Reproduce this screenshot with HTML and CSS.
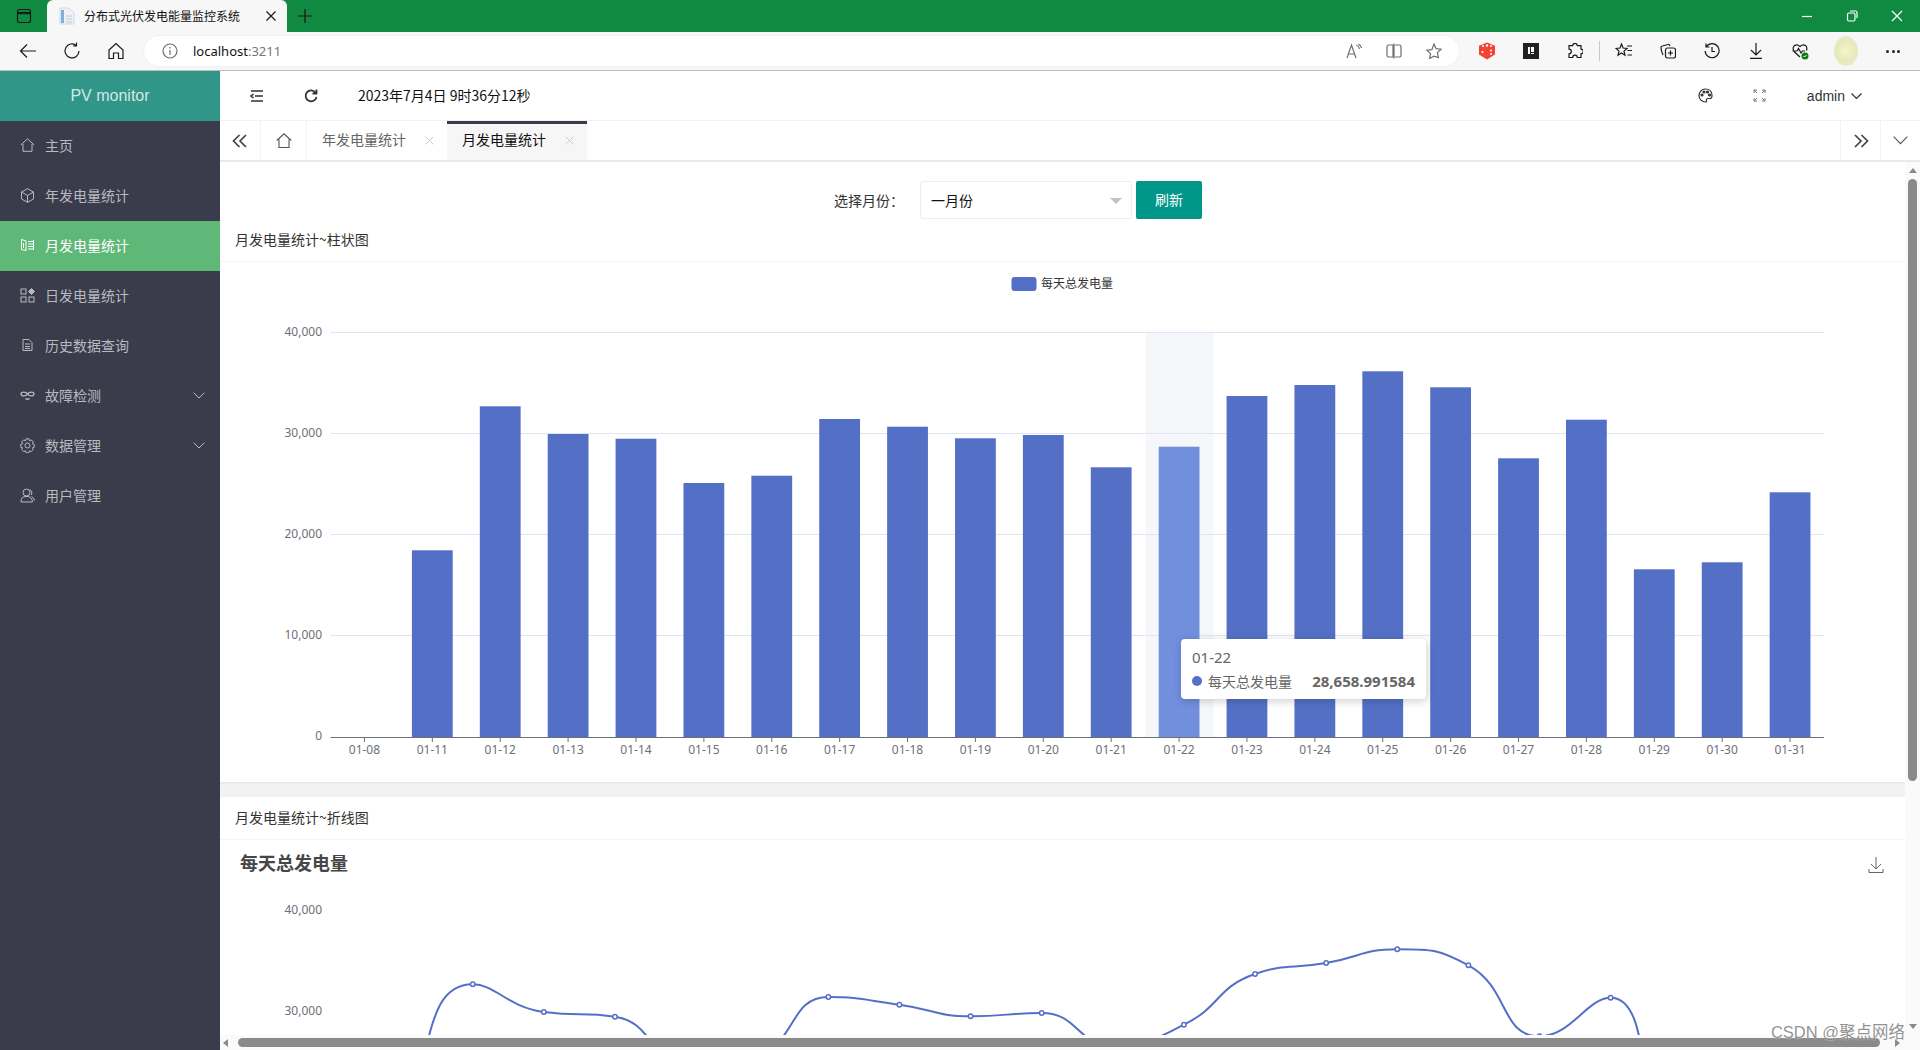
FILE: index.html
```html
<!DOCTYPE html>
<html lang="zh-CN">
<head>
<meta charset="utf-8">
<title>分布式光伏发电能量监控系统</title>
<link rel="stylesheet" href="styles.css">
</head>
<body>
<div class="win-tabs">
  <div class="win-menu"><svg width="16" height="16" viewBox="0 0 16 16" class="ic-dark"><rect x="1.5" y="1.5" width="13" height="13" rx="2"/><path d="M1.5 5h13" stroke-width="2.4"/></svg></div>
  <div class="win-tab">
    <svg width="16" height="18" viewBox="0 0 16 18"><path d="M1 1h9l5 5v11H1z" fill="#eef2f6" stroke="#c9d2da" stroke-width=".8"/><rect x="2" y="3" width="3" height="13" fill="#7fb0dc"/><path d="M7 9h6M7 12h6M7 15h6" stroke="#bcc6cf"/></svg>
    <span class="win-tab-title">分布式光伏发电能量监控系统</span>
    <svg class="ic-dark win-tab-x" width="10" height="10" viewBox="0 0 10 10"><path d="M.5.5l9 9M9.5.5l-9 9"/></svg>
  </div>
  <div class="win-plus"><svg class="ic-dark" width="14" height="14" viewBox="0 0 14 14"><path d="M7 0v14M0 7h14"/></svg></div>
  <div class="win-spacer"></div>
  <div class="win-ctl"><svg class="ic-light" width="12" height="12" viewBox="0 0 12 12"><path d="M1 6.5h10"/></svg></div>
  <div class="win-ctl"><svg class="ic-light" width="12" height="12" viewBox="0 0 12 12"><rect x="1.5" y="3" width="7.5" height="8" rx="1.5"/><path d="M4 1h5.5q1.5 0 1.500 1.5V8"/></svg></div>
  <div class="win-ctl"><svg class="ic-light" width="12" height="12" viewBox="0 0 12 12"><path d="M1 1l10 10M11 1L1 11"/></svg></div>
</div>

<div class="toolbar">
  <div class="tb-btn"><svg class="ic-dark" width="18" height="16" viewBox="0 0 18 16"><path d="M17 8H1.5M8 1.5L1.5 8 8 14.5"/></svg></div>
  <div class="tb-btn"><svg class="ic-dark" width="18" height="18" viewBox="0 0 18 18"><path d="M13.5 3.5A7 7 0 1 0 16 9M13.5 .5V4H10"/></svg></div>
  <div class="tb-btn"><svg class="ic-dark" width="16" height="18" viewBox="0 0 16 18"><path d="M1 8l7-6.5L15 8v8.5h-4.5V11h-5v5.5H1z"/></svg></div>
  <div class="address">
    <svg class="ic-gray addr-info" width="16" height="16" viewBox="0 0 16 16"><circle cx="8" cy="8" r="7"/><path d="M8 7v5M8 4v1.6"/></svg>
    <span class="addr-host">localhost<span class="addr-port">:3211</span></span>
    <div class="win-spacer"></div>
    <div class="addr-btn"><svg class="ic-gray" width="16" height="16" viewBox="0 0 16 16"><path d="M1 15L5.5 2 10 15M2.5 11h6M10.5 2q2.5 1 3 4M12.5 1q2.5 1.5 3 4"/></svg></div>
    <div class="addr-btn"><svg class="ic-gray" width="16" height="16" viewBox="0 0 16 16"><path d="M7 2H2.5Q1 2 1 3.5v9Q1 14 2.5 14H7zM9 2h4.5Q15 2 15 3.5v9q0 1.5-1.5 1.5H9M8 .5v15"/></svg></div>
    <div class="addr-btn"><svg class="ic-gray" width="16" height="16" viewBox="0 0 16 16"><path d="M8 1l2.1 4.600 5 .6-3.700 3.400 1 4.900L8 13.100l-4.400 2.400 1-4.900L.9 7.200l5-.6z"/></svg></div>
  </div>
  <div class="tb-btn tb-first"><svg width="18" height="18" viewBox="0 0 18 18"><path d="M9 .5l8 3.3v8.700L9 17.500 1 12.500V3.800z" fill="#f44336"/><circle cx="9" cy="3.500" r="1.200" fill="#fff"/><circle cx="5" cy="4" r="1" fill="#fff"/><circle cx="13" cy="4" r="1" fill="#fff"/><circle cx="4.500" cy="10" r="1.100" fill="#fff"/><circle cx="13" cy="8.500" r="1" fill="#fff"/><circle cx="13" cy="12" r="1" fill="#fff"/></svg></div>
  <div class="tb-btn"><svg width="16" height="16" viewBox="0 0 16 16"><rect width="16" height="16" fill="#222"/><path d="M5 4h2v7H5zM8 4h3v5H8zM8 10h3v1H8z" fill="#fff"/></svg></div>
  <div class="tb-btn"><svg class="ic-dark" width="16" height="16" viewBox="0 0 16 16"><path d="M5.700 2.700a2.300 2.300 0 0 1 4.600 0H14v3.500a2.300 2.300 0 0 1 0 4.600V14.500h-3.700a2.300 2.300 0 0 0-4.600 0H2v-3.700a2.300 2.300 0 0 0 0-4.600V2.700z"/></svg></div>
  <div class="tb-sep"></div>
  <div class="tb-btn"><svg class="ic-dark" width="18" height="16" viewBox="0 0 18 16"><path d="M6.500 1l1.600 4 4 .4-3.100 2.700 1 4.100-3.500-2.200-3.500 2.200 1-4.100L1 5.400l4-.4zM12 3h5M12.500 7.500H17M12.500 12H17"/></svg></div>
  <div class="tb-btn"><svg class="ic-dark" width="16" height="16" viewBox="0 0 16 16"><rect x="5.500" y="5" width="10" height="10" rx="2"/><path d="M10.500 7.500v5M8 10h5M3 12Q1 8 1 4.500 1 3 2.500 3L8 1.500Q9.500 1 10 3"/></svg></div>
  <div class="tb-btn"><svg class="ic-dark" width="16" height="16" viewBox="0 0 16 16"><path d="M2.500 3.500A7 7 0 1 1 1.100 8M2 .5V4h3.500M8 4v4.500h3"/></svg></div>
  <div class="tb-btn"><svg class="ic-dark" width="14" height="16" viewBox="0 0 14 16"><path d="M7 0v12M2 7l5 5 5-5M1 15.300h12"/></svg></div>
  <div class="tb-btn"><svg width="17" height="17" viewBox="0 0 17 17"><path class="stroke-dark" d="M8 14L2.500 9Q0 6 2 3q3-2.500 6 .5 3-3 6-.5 1.500 2 .5 4.500M.5 8H5l1.500-2.500L9 10l1.500-2H13" fill="none"/><circle cx="13" cy="13" r="3.500" fill="#107c10"/><path d="M11.500 13l1 1 2-2" stroke="#fff" fill="none"/></svg></div>
  <div class="tb-avatar"></div>
  <div class="tb-dots"><span></span><span></span><span></span></div>
</div>

<div class="app">
  <aside class="sidebar">
    <div class="logo">PV monitor</div>
    <nav class="menu">
      <a class="menu-item"><svg class="ic-menu" width="15" height="14" viewBox="0 0 15 14"><path d="M.8 7L7.500.8 14.200 7M3 6v7.300h9V6"/></svg><span>主页</span></a>
      <a class="menu-item"><svg class="ic-menu" width="15" height="15" viewBox="0 0 15 15"><path d="M7.500.7l6 3.300v7l-6 3.300-6-3.300V4zM1.500 4l6 3.500 6-3.500M7.500 7.500v6.800"/></svg><span>年发电量统计</span></a>
      <a class="menu-item is-active"><svg class="ic-menu" width="15" height="14" viewBox="0 0 15 14"><path d="M1.500 1.500L6 3v9.500l-4.500-1zM8 3.500h5M8 6h5M8 8.500h5M8 11h5M13.500 2v10M3.500 5v5"/></svg><span>月发电量统计</span></a>
      <a class="menu-item"><svg class="ic-menu" width="15" height="15" viewBox="0 0 15 15"><rect x="1" y="1" width="5" height="5"/><rect x="1" y="9" width="5" height="5"/><rect x="9" y="9" width="5" height="5"/><path d="M11.500 .5l3 3-3 3-3-3z" fill="currentColor"/></svg><span>日发电量统计</span></a>
      <a class="menu-item"><svg class="ic-menu" width="15" height="14" viewBox="0 0 15 14"><path d="M3 1.500h6l3 3v8H3zM5 6h5M5 8.500h5M5 10.500h5"/></svg><span>历史数据查询</span></a>
      <a class="menu-item"><svg class="ic-menu" width="15" height="12" viewBox="0 0 15 12"><path stroke-width="1.300" d="M7.500 5C6 2.500 1 2.500 1 5s5 2.500 6.500 0c1.500-2.500 6.500-2.500 6.500 0s-5 2.500-6.500 0M5.500 10h4"/></svg><span>故障检测</span><svg class="ic-menu menu-arrow" width="12" height="7" viewBox="0 0 12 7"><path d="M.7.7L6 6l5.300-5.300"/></svg></a>
      <a class="menu-item"><svg class="ic-menu" width="15" height="15" viewBox="0 0 15 15"><circle cx="7.500" cy="7.500" r="2.500"/><path d="M6 .8h3l.5 2 1.800-.9 2 2-.9 1.800 1.800.6v3l-1.800.5.9 1.800-2 2-1.800-.9-.5 2H6l-.5-2-1.800.9-2-2 .9-1.800-1.800-.5v-3l1.800-.6-.9-1.800 2-2 1.800.9z"/></svg><span>数据管理</span><svg class="ic-menu menu-arrow" width="12" height="7" viewBox="0 0 12 7"><path d="M.7.7L6 6l5.300-5.300"/></svg></a>
      <a class="menu-item"><svg class="ic-menu" width="15" height="15" viewBox="0 0 15 15"><circle cx="6.500" cy="4.500" r="3.500"/><path d="M1 14q0-5 4-5.500h3q4 .5 4.500 5.500zM10 1.500q3 2 1.500 5.500M11.500 8.500q2.500 1 3 4"/></svg><span>用户管理</span></a>
    </nav>
  </aside>

  <main class="main">
    <header class="header">
      <div class="hd-btn"><svg class="ic-head ic-strong" width="14" height="12" viewBox="0 0 14 12"><path d="M1 1h12M5 6h8M1 11h12M3.500 4L1 6l2.500 2"/></svg></div>
      <div class="hd-btn"><svg class="ic-head" width="14" height="14" viewBox="0 0 14 14"><path stroke-width="1.800" d="M11.500 3.500A5.500 5.500 0 1 0 12.500 8M12.500 .5v4h-4"/></svg></div>
      <div class="hd-date">2023年7月4日 9时36分12秒</div>
      <div class="win-spacer"></div>
      <div class="hd-btn"><svg class="ic-head" width="15" height="15" viewBox="0 0 15 15"><path d="M7.500 1a6.500 6.500 0 1 0 0 13q1.500 0 1-1.500-.5-2 1.500-2h2.500Q14 10.500 14 7 13.500 1 7.500 1z"/><circle cx="4" cy="7" r="1" fill="#333"/><circle cx="6" cy="4" r="1" fill="#333"/><circle cx="9.500" cy="4" r="1" fill="#333"/><circle cx="11.500" cy="7" r="1" fill="#333"/></svg></div>
      <div class="hd-btn"><svg class="ic-teal" width="13" height="13" viewBox="0 0 13 13"><path d="M1 4V1h3M9 1h3v3M12 9v3H9M4 12H1V9M1 1l3 3M12 1L9 4M12 12L9 9M1 12l3-3"/></svg></div>
      <div class="hd-user"><span>admin</span><svg class="ic-head" width="11" height="6" viewBox="0 0 11 6"><path d="M.5.5l5 5 5-5"/></svg></div>
    </header>

    <div class="tabbar">
      <div class="tab-ctl tab-ctl-left"><svg class="ic-tab" width="16" height="14" viewBox="0 0 16 14"><path d="M7.500 1L1.500 7l6 6M14 1L8 7l6 6"/></svg></div>
      <div class="tab-home"><svg class="ic-tab-thin" width="16" height="15" viewBox="0 0 16 15"><path d="M.8 7.500L8 .8l7.200 6.700M3 6.500v8h10v-8"/></svg></div>
      <div class="tab"><span>年发电量统计</span><svg class="tab-x" width="9" height="9" viewBox="0 0 9 9"><path d="M.5.5l8 8M8.500.5l-8 8"/></svg></div>
      <div class="tab is-active"><span>月发电量统计</span><svg class="tab-x" width="9" height="9" viewBox="0 0 9 9"><path d="M.5.5l8 8M8.500.5l-8 8"/></svg></div>
      <div class="win-spacer"></div>
      <div class="tab-ctl"><svg class="ic-tab" width="16" height="14" viewBox="0 0 16 14"><path d="M2 1l6 6-6 6M8.500 1l6 6-6 6"/></svg></div>
      <div class="tab-ctl"><svg class="ic-tab-thin" width="15" height="9" viewBox="0 0 15 9"><path d="M.7.7l6.800 7 6.800-7"/></svg></div>
    </div>

    <div class="content">
      <div class="viewport-col">
        <div class="viewport">
          <div class="filter">
            <label class="filter-label">选择月份：</label>
            <div class="select">一月份<span class="select-arrow"></span></div>
            <button class="btn">刷新</button>
          </div>
          <section class="card card-bar">
            <div class="card-head"><span>月发电量统计~柱状图</span></div>
            <svg id="barChart" class="chart chart-bar" viewBox="220 262 1685 520"></svg>
            <div class="tooltip">
              <div class="tooltip-title">01-22</div>
              <div class="tooltip-row"><i class="tooltip-dot"></i><span class="tooltip-name">每天总发电量</span><b class="tooltip-val">28,658.991584</b></div>
            </div>
          </section>
          <section class="card card-line">
            <div class="card-head"><span>月发电量统计~折线图</span></div>
            <svg id="lineChart" class="chart chart-line" viewBox="220 840 1685 300"></svg>
          </section>
        </div>
        <div class="hscroll">
          <span class="arrow arrow-left"></span>
          <div class="hscroll-thumb"></div>
          <span class="arrow arrow-right"></span>
        </div>
      </div>
      <div class="vscroll">
        <span class="arrow arrow-up"></span>
        <div class="vscroll-thumb"></div>
        <div class="win-spacer"></div>
        <span class="arrow arrow-down"></span>
      </div>
      <div class="watermark">CSDN @聚点网络</div>
    </div>
  </main>
</div>
<script src="chart.js"></script>
</body>
</html>
```
FILE: styles.css
```css
* { box-sizing: border-box; }
html, body { margin: 0; height: 1050px; overflow: hidden; }
body {
  display: flex;
  flex-direction: column;
  font-family: "Noto Sans CJK SC", "Noto Sans", sans-serif;
  font-size: 14px;
  color: #333;
  background: #fff;
}
svg { display: block; flex: none; }
.ic-dark, .ic-light, .ic-gray, .ic-menu, .ic-head, .ic-teal, .ic-tab, .ic-tab-thin { fill: none; stroke-width: 1.2; }
.ic-dark { stroke: #1a1a1a; }
.ic-light { stroke: #fff; }
.ic-gray { stroke: #6f6f6f; }
.ic-menu { stroke: currentColor; stroke-width: 1; }
.ic-head { stroke: #333; }
.ic-strong { stroke-width: 1.6; }
.ic-teal { stroke: #5b7f7c; stroke-width: 1; }
.ic-tab { stroke: #444; stroke-width: 1.7; }
.ic-tab-thin { stroke: #555; stroke-width: 1.1; }
.stroke-dark { stroke: #1a1a1a; stroke-width: 1.2; }
.win-spacer { flex: 1; }

/* browser frame */
.win-tabs { height: 32px; flex: none; display: flex; align-items: flex-end; background: #108a41; }
.win-menu { width: 47px; height: 32px; padding-left: 16px; display: flex; align-items: center; }
.win-tab {
  width: 240px; height: 32px; background: #f7f7f7; border-radius: 6px 6px 0 0;
  display: flex; align-items: center; padding-left: 12px; position: relative;
}
.win-tab-title { margin: -2px 0 0 9px; font-size: 12px; color: #111; white-space: nowrap; }
.win-tab-x { margin-left: 26px; }
.win-plus { width: 36px; height: 32px; padding-left: 11px; display: flex; align-items: center; }
.win-ctl { width: 45.3px; height: 32px; display: flex; align-items: center; justify-content: center; }

.toolbar {
  height: 39px; flex: none; display: flex; align-items: center; padding-left: 6px;
  background: #f7f7f7; border-bottom: 1px solid #bdbdbd;
}
.tb-btn { width: 44px; height: 30px; flex: none; display: flex; align-items: center; justify-content: center; }
.tb-first { margin-left: 6px; }
.address {
  width: 1315px; height: 30px; margin-left: 6px; flex: none; background: #fff; border-radius: 15px;
  display: flex; align-items: center; padding-left: 18px; padding-right: 5px; box-shadow: 0 0 2px rgba(0,0,0,.08);
}
.addr-host { margin-left: 15px; font-family: "Noto Sans", sans-serif; font-size: 13px; color: #111; }
.addr-port { color: #767676; }
.addr-btn { width: 40px; height: 30px; display: flex; align-items: center; justify-content: center; }
.tb-sep { width: 1px; height: 20px; background: #c8c8c8; margin: 0 2px 0 2px; flex: none; }
.tb-avatar {
  width: 24px; height: 30px; margin-left: 12px; flex: none; border-radius: 50%;
  background: radial-gradient(circle at 50% 50%, #f5f5c9 0, #e6e8bd 55%, #eeeed8 100%);
}
.tb-dots { margin-left: 28px; display: flex; gap: 2.5px; }
.tb-dots span { width: 3px; height: 3px; background: #222; border-radius: 50%; }

/* app */
.app { flex: 1; display: flex; min-height: 0; }
.sidebar { width: 220px; flex: none; background: #3a3c4b; }
.logo {
  height: 50px; background: #2f9688; color: rgba(255,255,255,.8);
  font-family: "Liberation Sans", sans-serif; font-size: 16px;
  display: flex; align-items: center; justify-content: center;
}
.menu-item {
  height: 50px; display: flex; align-items: center; padding: 0 15px 2px 20px;
  color: #b9bac0; font-size: 14px; line-height: 1;
}
.menu-item > span { margin-left: 10px; flex: 1; }
.menu-item.is-active { background: #5fb878; color: #fff; }
.menu-arrow { flex: none; }

.main { flex: 1; min-width: 0; display: flex; flex-direction: column; }
.header { height: 50px; flex: none; display: flex; align-items: center; padding: 0 58px 0 10px; border-bottom: 1px solid #f2f2f2; }
.hd-btn { width: 54px; height: 49px; display: flex; align-items: center; justify-content: center; }
.hd-date { margin: -2px 0 0 20px; color: #111; font-size: 14px; white-space: nowrap; }
.hd-user { margin-left: 20px; display: flex; align-items: center; gap: 6px; color: #333; font-family: "Liberation Sans", sans-serif; font-size: 14px; }

.tabbar { height: 41px; flex: none; display: flex; align-items: stretch; background: #fff; border-bottom: 2px solid #eaeaea; }
.tab-ctl { width: 40px; display: flex; align-items: center; justify-content: center; border-left: 1px solid #f4f4f4; }
.tab-ctl-left { border-left: 0; border-right: 1px solid #f4f4f4; width: 41px; }
.tab-home { width: 46px; display: flex; align-items: center; justify-content: center; border-right: 1px solid #f4f4f4; }
.tab {
  width: 140px; padding: 0 0 4px 15px; display: flex; align-items: center; color: #666; font-size: 14px; border-top: 3px solid transparent;
}
.tab > span { margin-top: -2px; }
.tab-x { margin-left: 19px; stroke: #ccc; fill: none; }
.tab.is-active { background: #f6f6f6; color: #111; border-top-color: #3a3c4b; }

.content { flex: 1; min-height: 0; display: flex; position: relative; }
.viewport-col { flex: 1; min-width: 0; display: flex; flex-direction: column; }
.viewport { flex: 1; min-height: 0; overflow: hidden; background: #f2f2f2; }

.filter { height: 57px; padding: 19px 0 0 614px; display: flex; align-items: center; background: #fff; }
.filter-label { width: 86px; color: #333; font-family: "Noto Sans CJK TC", "Noto Sans CJK SC", sans-serif; }
.select {
  width: 212px; height: 38px; padding-left: 10px; border: 1px solid #eee; border-radius: 2px;
  display: flex; align-items: center; position: relative; color: #111; background: #fff;
}
.select-arrow {
  position: absolute; right: 9px; top: 16px; width: 0; height: 0;
  border-left: 6px solid transparent; border-right: 6px solid transparent; border-top: 6px solid #c2c2c2;
}
.btn {
  width: 66px; height: 38px; margin-left: 4px; padding: 0 0 2px; border: 0; border-radius: 2px;
  background: #009688; color: #fff; font: inherit; font-size: 14px;
}
.card { background: #fff; position: relative; }
.card-bar { box-shadow: 0 1px 2px rgba(0,0,0,.06); }
.card-line { margin-top: 15px; }
.card-head { height: 43px; padding-left: 15px; display: flex; align-items: center; border-bottom: 1px solid #f4f4f4; color: #333; font-size: 14px; }
.card-head > span { margin-top: -2px; }
.chart { width: 1685px; }
.chart-bar { height: 520px; }
.chart-line { height: 300px; }
.grid { stroke: #e0e6f1; stroke-width: 1; }
.axis { stroke: #6e7079; stroke-width: 1; }
.axis-label { font-size: 12px; fill: #6e7079; font-family: "Noto Sans", "Noto Sans CJK SC", sans-serif; }
.band { fill: #f6f7fb; }
.bar { fill: #5470c6; }
.bar-hot { fill: #728fdd; }
.legend-box { fill: #5470c6; }
.legend-text { font-size: 12px; fill: #333; }
.line-path { fill: none; stroke: #5470c6; stroke-width: 2; }
.line-dot { fill: #fff; stroke: #5470c6; stroke-width: 1.5; }
.line-title { font-size: 18px; font-weight: 700; fill: #464646; }
.dl-icon { fill: none; stroke: #666; stroke-width: 1; }

.tooltip {
  position: absolute; left: 961px; top: 420px; width: 245px; height: 60px; padding: 6px 11px;
  background: #fff; border-radius: 4px; box-shadow: 1px 2px 10px rgba(0,0,0,.2); color: #666; line-height: 24px;
}
.tooltip-title { font-family: "Noto Sans", sans-serif; font-size: 15px; }
.tooltip-row { display: flex; align-items: center; font-size: 14px; }
.tooltip-dot { width: 10px; height: 10px; border-radius: 50%; background: #5470c6; margin-right: 6px; flex: none; }
.tooltip-name { flex: 1; }
.tooltip-val { font-family: "Noto Sans", sans-serif; font-weight: 700; font-size: 15px; }

.hscroll { height: 15px; flex: none; display: flex; align-items: center; background: #fafafa; position: relative; }
.hscroll-thumb { height: 9px; width: 1642px; margin-left: 10px; background: #8a8a8a; border-radius: 5px; }
.vscroll { width: 15px; flex: none; display: flex; flex-direction: column; align-items: center; padding: 6px 0 21px; background: #fafafa; }
.vscroll-thumb { width: 9px; height: 602px; margin-top: 6px; background: #8a8a8a; border-radius: 5px; }
.arrow { width: 0; height: 0; flex: none; border: 4px solid transparent; }
.arrow-up { border-top: 0; border-bottom: 5px solid #8a8a8a; }
.arrow-down { border-bottom: 0; border-top: 5px solid #8a8a8a; }
.arrow-left { border-left: 0; border-right: 5px solid #8a8a8a; margin-left: 3px; }
.arrow-right { border-right: 0; border-left: 5px solid #8a8a8a; margin-left: 15px; }
.watermark {
  position: absolute; right: 15px; bottom: 8px; font-family: "Liberation Sans", "Noto Sans CJK SC", sans-serif;
  font-size: 16.5px; line-height: 20px; color: rgba(110,110,110,.75); white-space: nowrap; text-shadow: 0 0 2px #fff;
}
```
FILE: chart.js
```js
(function () {
  var NS = 'http://www.w3.org/2000/svg';
  var days = ['01-08','01-11','01-12','01-13','01-14','01-15','01-16','01-17','01-18','01-19','01-20','01-21','01-22','01-23','01-24','01-25','01-26','01-27','01-28','01-29','01-30','01-31'];
  // top edge of each bar, in page pixels; value 0 sits on the axis
  var tops = [737,550.3,406.3,434,438.7,483,475.7,419,426.7,438.3,435,467.3,446.7,396,385,371.3,387.3,458.3,419.7,569.3,562.3,492.3];
  var ticks = ['40,000','30,000','20,000','10,000','0'];
  var L = 330.5, R = 1824, band = (R - L) / 22;

  function add(svg, name, attrs, text) {
    var el = document.createElementNS(NS, name);
    for (var k in attrs) el.setAttribute(k, attrs[k]);
    if (text) el.textContent = text;
    svg.appendChild(el);
    return el;
  }
  function grid(svg, y0, count) {
    for (var i = 0; i < count; i++) {
      var y = y0 + i * 101;
      if (y < 736) add(svg, 'line', { x1: L, x2: R, y1: y, y2: y, 'class': 'grid' });
      add(svg, 'text', { x: 322, y: y + 3, 'text-anchor': 'end', 'class': 'axis-label' }, ticks[i]);
    }
  }

  var bar = document.getElementById('barChart');
  add(bar, 'rect', { x: 1011.5, y: 277, width: 25, height: 14, rx: 3, 'class': 'legend-box' });
  add(bar, 'text', { x: 1041, y: 287.5, 'class': 'legend-text' }, '每天总发电量');
  add(bar, 'rect', { x: 1179.4 - band / 2, y: 332, width: band, height: 405, 'class': 'band' });
  grid(bar, 332.5, 5);
  days.forEach(function (d, i) {
    var c = L + band * (i + 0.5);
    if (i) add(bar, 'rect', { x: c - 20.4, y: tops[i], width: 40.8, height: 737 - tops[i], 'class': d === '01-22' ? 'bar-hot' : 'bar' });
    add(bar, 'line', { x1: c, x2: c, y1: 737, y2: 742, 'class': 'axis' });
    add(bar, 'text', { x: c, y: 754, 'text-anchor': 'middle', 'class': 'axis-label' }, d);
  });
  add(bar, 'line', { x1: L, x2: R, y1: 737.5, y2: 737.5, 'class': 'axis' });

  var line = document.getElementById('lineChart');
  add(line, 'text', { x: 240, y: 870, 'class': 'line-title' }, '每天总发电量');
  add(line, 'path', { d: 'M1869 869v3.500h14V869M1876 857v12M1871 864l5 5 5-5', 'class': 'dl-icon' });
  grid(line, 910.5, 2);
  var pts = tops.map(function (t, i) { return [L + (R - L) / 21 * i, t + 578]; });
  var d = 'M' + pts[0], s = 0.5, cp = pts[0];
  function clamp(v, a, b) { return Math.max(Math.min(a, b), Math.min(Math.max(a, b), v)); }
  for (var i = 1; i < pts.length; i++) {
    var p = pts[i], pr = pts[i - 1], nx = pts[i + 1] || p;
    var l0 = Math.hypot(p[0] - pr[0], p[1] - pr[1]), l1 = Math.hypot(nx[0] - p[0], nx[1] - p[1]);
    var r = l1 / (l0 + l1 || 1), vx = nx[0] - pr[0], vy = nx[1] - pr[1];
    var n = [clamp(p[0] + vx * s * r, p[0], nx[0]), clamp(p[1] + vy * s * r, p[1], nx[1])];
    var c0 = l1 ? [p[0] - (n[0] - p[0]) * l0 / l1, p[1] - (n[1] - p[1]) * l0 / l1] : p;
    c0 = [clamp(c0[0], p[0], pr[0]), clamp(c0[1], p[1], pr[1])];
    if (l1) n = [p[0] + (p[0] - c0[0]) * l1 / l0, p[1] + (p[1] - c0[1]) * l1 / l0];
    d += 'C' + cp + ' ' + c0 + ' ' + p;
    cp = n;
  }
  add(line, 'path', { d: d, 'class': 'line-path' });
  pts.forEach(function (p) { add(line, 'circle', { cx: p[0], cy: p[1], r: 2.2, 'class': 'line-dot' }); });
})();
```
